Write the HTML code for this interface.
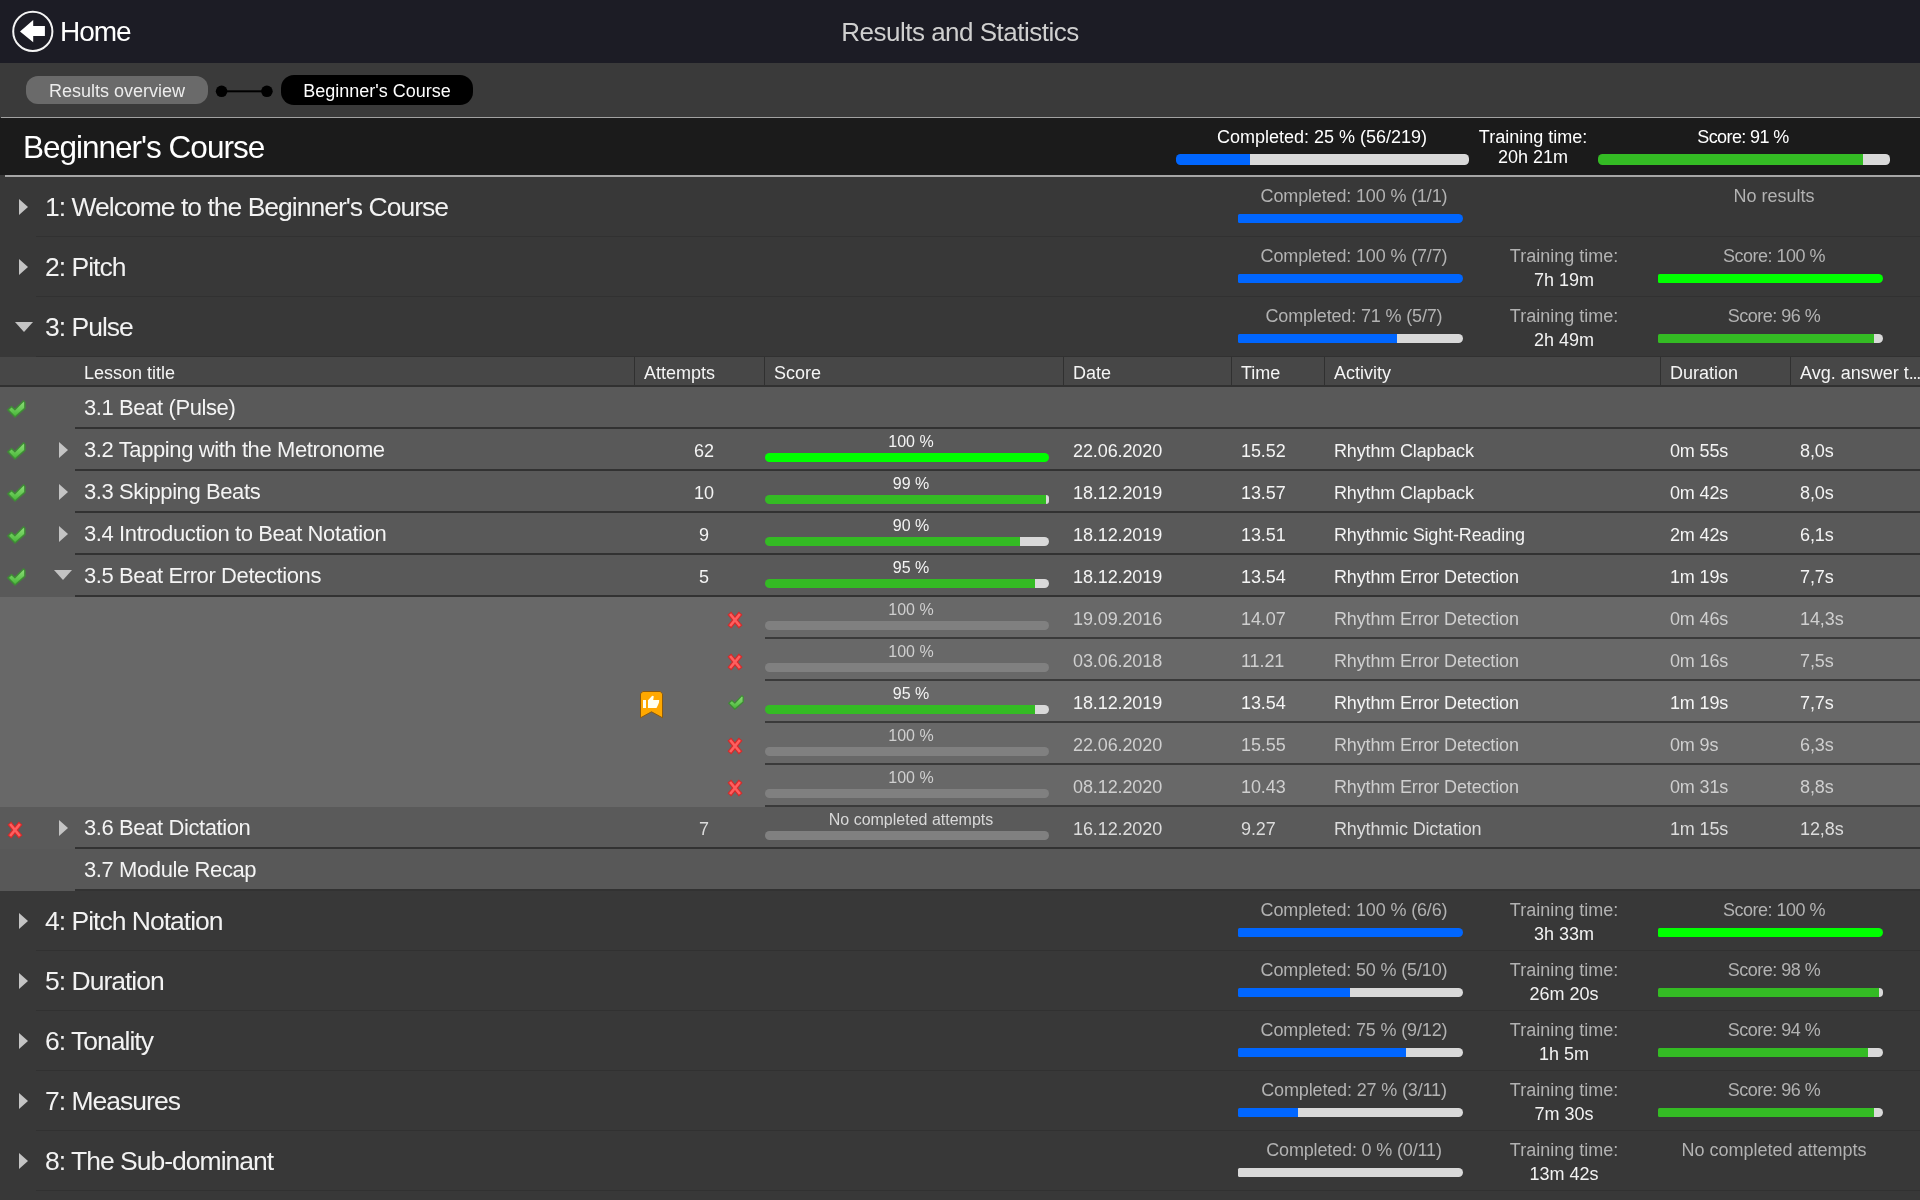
<!DOCTYPE html><html><head><meta charset="utf-8"><style>
html,body{margin:0;padding:0}body{width:1920px;height:1200px;overflow:hidden;position:relative;background:#383838;font-family:"Liberation Sans", sans-serif}
.t{position:absolute;white-space:nowrap;-webkit-font-smoothing:antialiased;will-change:transform}.r{position:absolute}
</style></head><body>
<div class="r" style="left:0px;top:0px;width:1920px;height:63px;background:#1c1c25;"></div>
<svg class="r" style="left:0;top:0" width="60" height="62"><circle cx="32.8" cy="31.4" r="19.6" fill="none" stroke="#f4f4f4" stroke-width="2"/><polygon points="20,31.4 33.2,20 33.2,25.9 44.9,25.9 44.9,36.1 33.2,36.1 33.2,42.3" fill="#fff"/></svg>
<div class="t" style="left:59.5px;top:16.40px;font-size:28px;line-height:32.20px;color:#ffffff;letter-spacing:-1px;">Home</div>
<div class="t" style="left:360px;width:1200px;text-align:center;top:17.94px;font-size:26px;line-height:29.90px;color:#cfcfcf;letter-spacing:-0.5px;">Results and Statistics</div>
<div class="r" style="left:0px;top:63px;width:1920px;height:54px;background:#3a3a3a;"></div>
<div class="r" style="left:26px;top:76px;width:182px;height:28px;background:#6a6a6a;border-radius:12px"></div>
<div class="t" style="left:-483px;width:1200px;text-align:center;top:80.61px;font-size:18px;line-height:20.70px;color:#ececec;">Results overview</div>
<svg class="r" style="left:210px;top:80px" width="70" height="24"><circle cx="11.6" cy="11.3" r="5.8" fill="#000"/><circle cx="56.9" cy="11.3" r="5.8" fill="#000"/><rect x="11" y="10.3" width="46" height="2" fill="#000"/></svg>
<div class="r" style="left:281px;top:75px;width:192px;height:30px;background:#000000;border-radius:13px"></div>
<div class="t" style="left:-223px;width:1200px;text-align:center;top:80.61px;font-size:18px;line-height:20.70px;color:#ffffff;">Beginner's Course</div>
<div class="r" style="left:1px;top:117px;width:1919px;height:1px;background:#a2a2a2;"></div>
<div class="r" style="left:0px;top:118px;width:1920px;height:57px;background:#1b1b1b;"></div>
<div class="t" style="left:23px;top:129.07px;font-size:31.5px;line-height:36.22px;color:#ffffff;letter-spacing:-1px;">Beginner's Course</div>
<div class="t" style="left:722px;width:1200px;text-align:center;top:127.31px;font-size:18px;line-height:20.70px;color:#ffffff;">Completed: 25 % (56/219)</div>
<div class="r" style="left:1176px;top:154px;width:74.0px;height:11px;background:#0066ff;border-radius:4.5px 0 0 4.5px"></div>
<div class="r" style="left:1250.0px;top:154px;width:219.0px;height:11px;background:#d9d9d9;border-radius:0 4.5px 4.5px 0"></div>
<div class="t" style="left:933px;width:1200px;text-align:center;top:127.31px;font-size:18px;line-height:20.70px;color:#ffffff;">Training time:</div>
<div class="t" style="left:933px;width:1200px;text-align:center;top:147.41px;font-size:18px;line-height:20.70px;color:#ffffff;">20h 21m</div>
<div class="t" style="left:1143px;width:1200px;text-align:center;top:127.31px;font-size:18px;line-height:20.70px;color:#ffffff;letter-spacing:-0.6px;">Score: 91 %</div>
<div class="r" style="left:1598px;top:154px;width:264.8px;height:11px;background:#34bb24;border-radius:4.5px 0 0 4.5px"></div>
<div class="r" style="left:1862.8px;top:154px;width:27.2px;height:11px;background:#d9d9d9;border-radius:0 4.5px 4.5px 0"></div>
<div class="r" style="left:5px;top:175px;width:1915px;height:2px;background:#a6a6a6;"></div>
<svg class="r" style="left:19px;top:199px" width="9" height="16"><polygon points="0,0 9,8.0 0,16" fill="#c4c4c4"/></svg>
<div class="t" style="left:45px;top:191.58px;font-size:26.5px;line-height:30.47px;color:#f2f2f2;letter-spacing:-0.99px;">1: Welcome to the Beginner's Course</div>
<div class="t" style="left:754px;width:1200px;text-align:center;top:186.41px;font-size:18px;line-height:20.70px;color:#b2b2b2;letter-spacing:-0.15px;">Completed: 100 % (1/1)</div>
<div class="r" style="left:1238px;top:214px;width:225px;height:9px;background:#0066ff;border-radius:1.5px 4.5px 4.5px 1.5px"></div>
<div class="t" style="left:1174px;width:1200px;text-align:center;top:186.41px;font-size:18px;line-height:20.70px;color:#b2b2b2;">No results</div>
<div class="r" style="left:36px;top:236px;width:1884px;height:1px;background:#313131;"></div>
<svg class="r" style="left:19px;top:259px" width="9" height="16"><polygon points="0,0 9,8.0 0,16" fill="#c4c4c4"/></svg>
<div class="t" style="left:45px;top:251.58px;font-size:26.5px;line-height:30.47px;color:#f2f2f2;letter-spacing:-0.99px;">2: Pitch</div>
<div class="t" style="left:754px;width:1200px;text-align:center;top:246.41px;font-size:18px;line-height:20.70px;color:#b2b2b2;letter-spacing:-0.15px;">Completed: 100 % (7/7)</div>
<div class="r" style="left:1238px;top:274px;width:225px;height:9px;background:#0066ff;border-radius:1.5px 4.5px 4.5px 1.5px"></div>
<div class="t" style="left:964px;width:1200px;text-align:center;top:246.41px;font-size:18px;line-height:20.70px;color:#b2b2b2;">Training time:</div>
<div class="t" style="left:964px;width:1200px;text-align:center;top:270.41px;font-size:18px;line-height:20.70px;color:#f2f2f2;">7h 19m</div>
<div class="t" style="left:1174px;width:1200px;text-align:center;top:246.41px;font-size:18px;line-height:20.70px;color:#b2b2b2;letter-spacing:-0.5px;">Score: 100 %</div>
<div class="r" style="left:1658px;top:274px;width:225px;height:9px;background:#00ff00;border-radius:1.5px 4.5px 4.5px 1.5px"></div>
<div class="r" style="left:36px;top:296px;width:1884px;height:1px;background:#313131;"></div>
<svg class="r" style="left:15px;top:322px" width="18" height="10"><polygon points="0,0 18,0 9.0,10" fill="#c4c4c4"/></svg>
<div class="t" style="left:45px;top:311.58px;font-size:26.5px;line-height:30.47px;color:#f2f2f2;letter-spacing:-0.99px;">3: Pulse</div>
<div class="t" style="left:754px;width:1200px;text-align:center;top:306.41px;font-size:18px;line-height:20.70px;color:#b2b2b2;letter-spacing:-0.15px;">Completed: 71 % (5/7)</div>
<div class="r" style="left:1238px;top:334px;width:158.6px;height:9px;background:#0066ff;border-radius:1.5px 0 0 1.5px"></div>
<div class="r" style="left:1396.6px;top:334px;width:66.4px;height:9px;background:#d9d9d9;border-radius:0 4.5px 4.5px 0"></div>
<div class="t" style="left:964px;width:1200px;text-align:center;top:306.41px;font-size:18px;line-height:20.70px;color:#b2b2b2;">Training time:</div>
<div class="t" style="left:964px;width:1200px;text-align:center;top:330.41px;font-size:18px;line-height:20.70px;color:#f2f2f2;">2h 49m</div>
<div class="t" style="left:1174px;width:1200px;text-align:center;top:306.41px;font-size:18px;line-height:20.70px;color:#b2b2b2;letter-spacing:-0.5px;">Score: 96 %</div>
<div class="r" style="left:1658px;top:334px;width:216.0px;height:9px;background:#34bb24;border-radius:1.5px 0 0 1.5px"></div>
<div class="r" style="left:1874.0px;top:334px;width:9.0px;height:9px;background:#d9d9d9;border-radius:0 4.5px 4.5px 0"></div>
<div class="r" style="left:36px;top:356px;width:1884px;height:1px;background:#313131;"></div>
<div class="r" style="left:0px;top:357px;width:1920px;height:28px;background:#474747;"></div>
<div class="r" style="left:0px;top:385px;width:1920px;height:2px;background:#313131;"></div>
<div class="r" style="left:634px;top:357px;width:1px;height:28px;background:#303030;"></div>
<div class="r" style="left:764px;top:357px;width:1px;height:28px;background:#303030;"></div>
<div class="r" style="left:1063px;top:357px;width:1px;height:28px;background:#303030;"></div>
<div class="r" style="left:1231px;top:357px;width:1px;height:28px;background:#303030;"></div>
<div class="r" style="left:1324px;top:357px;width:1px;height:28px;background:#303030;"></div>
<div class="r" style="left:1660px;top:357px;width:1px;height:28px;background:#303030;"></div>
<div class="r" style="left:1790px;top:357px;width:1px;height:28px;background:#303030;"></div>
<div class="t" style="left:84px;top:362.91px;font-size:18px;line-height:20.70px;color:#f4f4f4;">Lesson title</div>
<div class="t" style="left:644px;top:362.91px;font-size:18px;line-height:20.70px;color:#f4f4f4;">Attempts</div>
<div class="t" style="left:774px;top:362.91px;font-size:18px;line-height:20.70px;color:#f4f4f4;">Score</div>
<div class="t" style="left:1073px;top:362.91px;font-size:18px;line-height:20.70px;color:#f4f4f4;">Date</div>
<div class="t" style="left:1241px;top:362.91px;font-size:18px;line-height:20.70px;color:#f4f4f4;">Time</div>
<div class="t" style="left:1334px;top:362.91px;font-size:18px;line-height:20.70px;color:#f4f4f4;">Activity</div>
<div class="t" style="left:1670px;top:362.91px;font-size:18px;line-height:20.70px;color:#f4f4f4;">Duration</div>
<div class="t" style="left:1800px;top:362.91px;font-size:18px;line-height:20.70px;color:#f4f4f4;">Avg. answer t<span style="letter-spacing:-1.3px">...</span></div>
<div class="r" style="left:0px;top:387px;width:1920px;height:42px;background:#595959;"></div>
<div class="r" style="left:75px;top:427px;width:1845px;height:2px;background:#323232;"></div>
<svg class="r" style="left:7px;top:399px" width="20" height="20" viewBox="0 0 20 20"><defs><linearGradient id="g7399" x1="0" y1="0" x2="0" y2="1"><stop offset="0" stop-color="#8fe07a"/><stop offset="1" stop-color="#45b535"/></linearGradient></defs><polygon points="0.9,10.9 4.5,7.5 8,10.6 16.4,1.9 17.9,3.2 17.9,9.4 8,18" fill="url(#g7399)" stroke="#3f8a36" stroke-width="1.5" stroke-linejoin="round"/></svg>
<div class="t" style="left:84px;top:394.93px;font-size:22px;line-height:25.30px;color:#f4f4f4;letter-spacing:-0.4px;">3.1 Beat (Pulse)</div>
<div class="r" style="left:0px;top:429px;width:1920px;height:42px;background:#595959;"></div>
<div class="r" style="left:75px;top:469px;width:1845px;height:2px;background:#323232;"></div>
<svg class="r" style="left:7px;top:441px" width="20" height="20" viewBox="0 0 20 20"><defs><linearGradient id="g7441" x1="0" y1="0" x2="0" y2="1"><stop offset="0" stop-color="#8fe07a"/><stop offset="1" stop-color="#45b535"/></linearGradient></defs><polygon points="0.9,10.9 4.5,7.5 8,10.6 16.4,1.9 17.9,3.2 17.9,9.4 8,18" fill="url(#g7441)" stroke="#3f8a36" stroke-width="1.5" stroke-linejoin="round"/></svg>
<svg class="r" style="left:58.6px;top:442px" width="9" height="16"><polygon points="0,0 9,8.0 0,16" fill="#c4c4c4"/></svg>
<div class="t" style="left:84px;top:436.93px;font-size:22px;line-height:25.30px;color:#f4f4f4;letter-spacing:-0.4px;">3.2 Tapping with the Metronome</div>
<div class="t" style="left:104px;width:1200px;text-align:center;top:441.31px;font-size:18px;line-height:20.70px;color:#f4f4f4;">62</div>
<div class="t" style="left:311px;width:1200px;text-align:center;top:433.16px;font-size:16px;line-height:18.40px;color:#f4f4f4;">100 %</div>
<div class="r" style="left:765px;top:453px;width:284px;height:9px;background:#00ff00;border-radius:4.5px 4.5px 4.5px 4.5px"></div>
<div class="t" style="left:1073px;top:441.31px;font-size:18px;line-height:20.70px;color:#f4f4f4;letter-spacing:-0.1px;">22.06.2020</div>
<div class="t" style="left:1241px;top:441.31px;font-size:18px;line-height:20.70px;color:#f4f4f4;letter-spacing:-0.1px;">15.52</div>
<div class="t" style="left:1334px;top:441.31px;font-size:18px;line-height:20.70px;color:#f4f4f4;letter-spacing:-0.15px;">Rhythm Clapback</div>
<div class="t" style="left:1670px;top:441.31px;font-size:18px;line-height:20.70px;color:#f4f4f4;letter-spacing:-0.15px;">0m 55s</div>
<div class="t" style="left:1800px;top:441.31px;font-size:18px;line-height:20.70px;color:#f4f4f4;letter-spacing:-0.1px;">8,0s</div>
<div class="r" style="left:0px;top:471px;width:1920px;height:42px;background:#595959;"></div>
<div class="r" style="left:75px;top:511px;width:1845px;height:2px;background:#323232;"></div>
<svg class="r" style="left:7px;top:483px" width="20" height="20" viewBox="0 0 20 20"><defs><linearGradient id="g7483" x1="0" y1="0" x2="0" y2="1"><stop offset="0" stop-color="#8fe07a"/><stop offset="1" stop-color="#45b535"/></linearGradient></defs><polygon points="0.9,10.9 4.5,7.5 8,10.6 16.4,1.9 17.9,3.2 17.9,9.4 8,18" fill="url(#g7483)" stroke="#3f8a36" stroke-width="1.5" stroke-linejoin="round"/></svg>
<svg class="r" style="left:58.6px;top:484px" width="9" height="16"><polygon points="0,0 9,8.0 0,16" fill="#c4c4c4"/></svg>
<div class="t" style="left:84px;top:478.93px;font-size:22px;line-height:25.30px;color:#f4f4f4;letter-spacing:-0.4px;">3.3 Skipping Beats</div>
<div class="t" style="left:104px;width:1200px;text-align:center;top:483.31px;font-size:18px;line-height:20.70px;color:#f4f4f4;">10</div>
<div class="t" style="left:311px;width:1200px;text-align:center;top:475.16px;font-size:16px;line-height:18.40px;color:#f4f4f4;">99 %</div>
<div class="r" style="left:765px;top:495px;width:281.2px;height:9px;background:#34bb24;border-radius:4.5px 0 0 4.5px"></div>
<div class="r" style="left:1046.2px;top:495px;width:2.8px;height:9px;background:#d9d9d9;border-radius:0 4.5px 4.5px 0"></div>
<div class="t" style="left:1073px;top:483.31px;font-size:18px;line-height:20.70px;color:#f4f4f4;letter-spacing:-0.1px;">18.12.2019</div>
<div class="t" style="left:1241px;top:483.31px;font-size:18px;line-height:20.70px;color:#f4f4f4;letter-spacing:-0.1px;">13.57</div>
<div class="t" style="left:1334px;top:483.31px;font-size:18px;line-height:20.70px;color:#f4f4f4;letter-spacing:-0.15px;">Rhythm Clapback</div>
<div class="t" style="left:1670px;top:483.31px;font-size:18px;line-height:20.70px;color:#f4f4f4;letter-spacing:-0.15px;">0m 42s</div>
<div class="t" style="left:1800px;top:483.31px;font-size:18px;line-height:20.70px;color:#f4f4f4;letter-spacing:-0.1px;">8,0s</div>
<div class="r" style="left:0px;top:513px;width:1920px;height:42px;background:#595959;"></div>
<div class="r" style="left:75px;top:553px;width:1845px;height:2px;background:#323232;"></div>
<svg class="r" style="left:7px;top:525px" width="20" height="20" viewBox="0 0 20 20"><defs><linearGradient id="g7525" x1="0" y1="0" x2="0" y2="1"><stop offset="0" stop-color="#8fe07a"/><stop offset="1" stop-color="#45b535"/></linearGradient></defs><polygon points="0.9,10.9 4.5,7.5 8,10.6 16.4,1.9 17.9,3.2 17.9,9.4 8,18" fill="url(#g7525)" stroke="#3f8a36" stroke-width="1.5" stroke-linejoin="round"/></svg>
<svg class="r" style="left:58.6px;top:526px" width="9" height="16"><polygon points="0,0 9,8.0 0,16" fill="#c4c4c4"/></svg>
<div class="t" style="left:84px;top:520.93px;font-size:22px;line-height:25.30px;color:#f4f4f4;letter-spacing:-0.4px;">3.4 Introduction to Beat Notation</div>
<div class="t" style="left:104px;width:1200px;text-align:center;top:525.31px;font-size:18px;line-height:20.70px;color:#f4f4f4;">9</div>
<div class="t" style="left:311px;width:1200px;text-align:center;top:517.16px;font-size:16px;line-height:18.40px;color:#f4f4f4;">90 %</div>
<div class="r" style="left:765px;top:537px;width:254.7px;height:9px;background:#34bb24;border-radius:4.5px 0 0 4.5px"></div>
<div class="r" style="left:1019.7px;top:537px;width:29.3px;height:9px;background:#d9d9d9;border-radius:0 4.5px 4.5px 0"></div>
<div class="t" style="left:1073px;top:525.31px;font-size:18px;line-height:20.70px;color:#f4f4f4;letter-spacing:-0.1px;">18.12.2019</div>
<div class="t" style="left:1241px;top:525.31px;font-size:18px;line-height:20.70px;color:#f4f4f4;letter-spacing:-0.1px;">13.51</div>
<div class="t" style="left:1334px;top:525.31px;font-size:18px;line-height:20.70px;color:#f4f4f4;letter-spacing:-0.15px;">Rhythmic Sight-Reading</div>
<div class="t" style="left:1670px;top:525.31px;font-size:18px;line-height:20.70px;color:#f4f4f4;letter-spacing:-0.15px;">2m 42s</div>
<div class="t" style="left:1800px;top:525.31px;font-size:18px;line-height:20.70px;color:#f4f4f4;letter-spacing:-0.1px;">6,1s</div>
<div class="r" style="left:0px;top:555px;width:1920px;height:42px;background:#595959;"></div>
<div class="r" style="left:75px;top:595px;width:1845px;height:2px;background:#323232;"></div>
<svg class="r" style="left:7px;top:567px" width="20" height="20" viewBox="0 0 20 20"><defs><linearGradient id="g7567" x1="0" y1="0" x2="0" y2="1"><stop offset="0" stop-color="#8fe07a"/><stop offset="1" stop-color="#45b535"/></linearGradient></defs><polygon points="0.9,10.9 4.5,7.5 8,10.6 16.4,1.9 17.9,3.2 17.9,9.4 8,18" fill="url(#g7567)" stroke="#3f8a36" stroke-width="1.5" stroke-linejoin="round"/></svg>
<svg class="r" style="left:54px;top:570px" width="18" height="10"><polygon points="0,0 18,0 9.0,10" fill="#c4c4c4"/></svg>
<div class="t" style="left:84px;top:562.93px;font-size:22px;line-height:25.30px;color:#f4f4f4;letter-spacing:-0.4px;">3.5 Beat Error Detections</div>
<div class="t" style="left:104px;width:1200px;text-align:center;top:567.31px;font-size:18px;line-height:20.70px;color:#f4f4f4;">5</div>
<div class="t" style="left:311px;width:1200px;text-align:center;top:559.16px;font-size:16px;line-height:18.40px;color:#f4f4f4;">95 %</div>
<div class="r" style="left:765px;top:579px;width:269.8px;height:9px;background:#34bb24;border-radius:4.5px 0 0 4.5px"></div>
<div class="r" style="left:1034.8px;top:579px;width:14.2px;height:9px;background:#d9d9d9;border-radius:0 4.5px 4.5px 0"></div>
<div class="t" style="left:1073px;top:567.31px;font-size:18px;line-height:20.70px;color:#f4f4f4;letter-spacing:-0.1px;">18.12.2019</div>
<div class="t" style="left:1241px;top:567.31px;font-size:18px;line-height:20.70px;color:#f4f4f4;letter-spacing:-0.1px;">13.54</div>
<div class="t" style="left:1334px;top:567.31px;font-size:18px;line-height:20.70px;color:#f4f4f4;letter-spacing:-0.15px;">Rhythm Error Detection</div>
<div class="t" style="left:1670px;top:567.31px;font-size:18px;line-height:20.70px;color:#f4f4f4;letter-spacing:-0.15px;">1m 19s</div>
<div class="t" style="left:1800px;top:567.31px;font-size:18px;line-height:20.70px;color:#f4f4f4;letter-spacing:-0.1px;">7,7s</div>
<div class="r" style="left:0px;top:597px;width:1920px;height:210px;background:#686868;"></div>
<div class="r" style="left:765px;top:637px;width:1155px;height:2px;background:#3a3a3a;"></div>
<svg class="r" style="left:727px;top:611px" width="16" height="18" viewBox="0 0 16 18"><path d="M3.9,4 L12.1,14 M12.1,4 L3.9,14" stroke="#d62a2a" stroke-width="4.8" stroke-linecap="square"/><path d="M3.9,4 L12.1,14 M12.1,4 L3.9,14" stroke="#ff5e5e" stroke-width="2.6" stroke-linecap="square"/></svg>
<div class="t" style="left:311px;width:1200px;text-align:center;top:601.16px;font-size:16px;line-height:18.40px;color:#cfcfcf;">100 %</div>
<div class="r" style="left:765px;top:621px;width:284px;height:9px;background:#808080;border-radius:4.5px 4.5px 4.5px 4.5px"></div>
<div class="t" style="left:1073px;top:609.31px;font-size:18px;line-height:20.70px;color:#cfcfcf;letter-spacing:-0.1px;">19.09.2016</div>
<div class="t" style="left:1241px;top:609.31px;font-size:18px;line-height:20.70px;color:#cfcfcf;letter-spacing:-0.1px;">14.07</div>
<div class="t" style="left:1334px;top:609.31px;font-size:18px;line-height:20.70px;color:#cfcfcf;letter-spacing:-0.15px;">Rhythm Error Detection</div>
<div class="t" style="left:1670px;top:609.31px;font-size:18px;line-height:20.70px;color:#cfcfcf;letter-spacing:-0.15px;">0m 46s</div>
<div class="t" style="left:1800px;top:609.31px;font-size:18px;line-height:20.70px;color:#cfcfcf;letter-spacing:-0.1px;">14,3s</div>
<div class="r" style="left:765px;top:679px;width:1155px;height:2px;background:#3a3a3a;"></div>
<svg class="r" style="left:727px;top:653px" width="16" height="18" viewBox="0 0 16 18"><path d="M3.9,4 L12.1,14 M12.1,4 L3.9,14" stroke="#d62a2a" stroke-width="4.8" stroke-linecap="square"/><path d="M3.9,4 L12.1,14 M12.1,4 L3.9,14" stroke="#ff5e5e" stroke-width="2.6" stroke-linecap="square"/></svg>
<div class="t" style="left:311px;width:1200px;text-align:center;top:643.16px;font-size:16px;line-height:18.40px;color:#cfcfcf;">100 %</div>
<div class="r" style="left:765px;top:663px;width:284px;height:9px;background:#808080;border-radius:4.5px 4.5px 4.5px 4.5px"></div>
<div class="t" style="left:1073px;top:651.31px;font-size:18px;line-height:20.70px;color:#cfcfcf;letter-spacing:-0.1px;">03.06.2018</div>
<div class="t" style="left:1241px;top:651.31px;font-size:18px;line-height:20.70px;color:#cfcfcf;letter-spacing:-0.1px;">11.21</div>
<div class="t" style="left:1334px;top:651.31px;font-size:18px;line-height:20.70px;color:#cfcfcf;letter-spacing:-0.15px;">Rhythm Error Detection</div>
<div class="t" style="left:1670px;top:651.31px;font-size:18px;line-height:20.70px;color:#cfcfcf;letter-spacing:-0.15px;">0m 16s</div>
<div class="t" style="left:1800px;top:651.31px;font-size:18px;line-height:20.70px;color:#cfcfcf;letter-spacing:-0.1px;">7,5s</div>
<div class="r" style="left:765px;top:721px;width:1155px;height:2px;background:#3a3a3a;"></div>
<svg class="r" style="left:728px;top:694px" width="17" height="17" viewBox="0 0 20 20"><defs><linearGradient id="gb" x1="0" y1="0" x2="0" y2="1"><stop offset="0" stop-color="#8fe07a"/><stop offset="1" stop-color="#45b535"/></linearGradient></defs><polygon points="0.9,10.9 4.5,7.5 8,10.6 16.4,1.9 17.9,3.2 17.9,9.4 8,18" fill="url(#gb)" stroke="#3f8a36" stroke-width="1.5" stroke-linejoin="round"/></svg>
<div class="t" style="left:311px;width:1200px;text-align:center;top:685.16px;font-size:16px;line-height:18.40px;color:#f4f4f4;">95 %</div>
<div class="r" style="left:765px;top:705px;width:269.8px;height:9px;background:#34bb24;border-radius:4.5px 0 0 4.5px"></div>
<div class="r" style="left:1034.8px;top:705px;width:14.2px;height:9px;background:#d9d9d9;border-radius:0 4.5px 4.5px 0"></div>
<div class="t" style="left:1073px;top:693.31px;font-size:18px;line-height:20.70px;color:#f4f4f4;letter-spacing:-0.1px;">18.12.2019</div>
<div class="t" style="left:1241px;top:693.31px;font-size:18px;line-height:20.70px;color:#f4f4f4;letter-spacing:-0.1px;">13.54</div>
<div class="t" style="left:1334px;top:693.31px;font-size:18px;line-height:20.70px;color:#f4f4f4;letter-spacing:-0.15px;">Rhythm Error Detection</div>
<div class="t" style="left:1670px;top:693.31px;font-size:18px;line-height:20.70px;color:#f4f4f4;letter-spacing:-0.15px;">1m 19s</div>
<div class="t" style="left:1800px;top:693.31px;font-size:18px;line-height:20.70px;color:#f4f4f4;letter-spacing:-0.1px;">7,7s</div>
<svg class="r" style="left:639px;top:690px" width="25" height="29" viewBox="0 0 25 29"><path d="M1.5,3.8 L3.8,1.5 L21.2,1.5 L23.5,3.8 L23.5,27.8 L12.5,21.8 L1.5,27.8 Z" fill="#ffa800" stroke="#8a5a10" stroke-width="1"/><rect x="4" y="10" width="3" height="8" fill="#fffff0"/><path d="M9,18 L9,10.2 L13.2,5.8 L14.8,6.2 L14.2,10 L20.2,10 L20,12.5 L19,15 L17.5,18 Z" fill="#fffff0"/></svg>
<div class="r" style="left:765px;top:763px;width:1155px;height:2px;background:#3a3a3a;"></div>
<svg class="r" style="left:727px;top:737px" width="16" height="18" viewBox="0 0 16 18"><path d="M3.9,4 L12.1,14 M12.1,4 L3.9,14" stroke="#d62a2a" stroke-width="4.8" stroke-linecap="square"/><path d="M3.9,4 L12.1,14 M12.1,4 L3.9,14" stroke="#ff5e5e" stroke-width="2.6" stroke-linecap="square"/></svg>
<div class="t" style="left:311px;width:1200px;text-align:center;top:727.16px;font-size:16px;line-height:18.40px;color:#cfcfcf;">100 %</div>
<div class="r" style="left:765px;top:747px;width:284px;height:9px;background:#808080;border-radius:4.5px 4.5px 4.5px 4.5px"></div>
<div class="t" style="left:1073px;top:735.31px;font-size:18px;line-height:20.70px;color:#cfcfcf;letter-spacing:-0.1px;">22.06.2020</div>
<div class="t" style="left:1241px;top:735.31px;font-size:18px;line-height:20.70px;color:#cfcfcf;letter-spacing:-0.1px;">15.55</div>
<div class="t" style="left:1334px;top:735.31px;font-size:18px;line-height:20.70px;color:#cfcfcf;letter-spacing:-0.15px;">Rhythm Error Detection</div>
<div class="t" style="left:1670px;top:735.31px;font-size:18px;line-height:20.70px;color:#cfcfcf;letter-spacing:-0.15px;">0m 9s</div>
<div class="t" style="left:1800px;top:735.31px;font-size:18px;line-height:20.70px;color:#cfcfcf;letter-spacing:-0.1px;">6,3s</div>
<div class="r" style="left:765px;top:805px;width:1155px;height:2px;background:#3a3a3a;"></div>
<svg class="r" style="left:727px;top:779px" width="16" height="18" viewBox="0 0 16 18"><path d="M3.9,4 L12.1,14 M12.1,4 L3.9,14" stroke="#d62a2a" stroke-width="4.8" stroke-linecap="square"/><path d="M3.9,4 L12.1,14 M12.1,4 L3.9,14" stroke="#ff5e5e" stroke-width="2.6" stroke-linecap="square"/></svg>
<div class="t" style="left:311px;width:1200px;text-align:center;top:769.16px;font-size:16px;line-height:18.40px;color:#cfcfcf;">100 %</div>
<div class="r" style="left:765px;top:789px;width:284px;height:9px;background:#808080;border-radius:4.5px 4.5px 4.5px 4.5px"></div>
<div class="t" style="left:1073px;top:777.31px;font-size:18px;line-height:20.70px;color:#cfcfcf;letter-spacing:-0.1px;">08.12.2020</div>
<div class="t" style="left:1241px;top:777.31px;font-size:18px;line-height:20.70px;color:#cfcfcf;letter-spacing:-0.1px;">10.43</div>
<div class="t" style="left:1334px;top:777.31px;font-size:18px;line-height:20.70px;color:#cfcfcf;letter-spacing:-0.15px;">Rhythm Error Detection</div>
<div class="t" style="left:1670px;top:777.31px;font-size:18px;line-height:20.70px;color:#cfcfcf;letter-spacing:-0.15px;">0m 31s</div>
<div class="t" style="left:1800px;top:777.31px;font-size:18px;line-height:20.70px;color:#cfcfcf;letter-spacing:-0.1px;">8,8s</div>
<div class="r" style="left:0px;top:807px;width:1920px;height:42px;background:#5a5a5a;"></div>
<div class="r" style="left:75px;top:847px;width:1845px;height:2px;background:#323232;"></div>
<svg class="r" style="left:7px;top:821px" width="16" height="18" viewBox="0 0 16 18"><path d="M3.9,4 L12.1,14 M12.1,4 L3.9,14" stroke="#d62a2a" stroke-width="4.8" stroke-linecap="square"/><path d="M3.9,4 L12.1,14 M12.1,4 L3.9,14" stroke="#ff5e5e" stroke-width="2.6" stroke-linecap="square"/></svg>
<svg class="r" style="left:58.6px;top:820px" width="9" height="16"><polygon points="0,0 9,8.0 0,16" fill="#c4c4c4"/></svg>
<div class="t" style="left:84px;top:814.93px;font-size:22px;line-height:25.30px;color:#f4f4f4;letter-spacing:-0.4px;">3.6 Beat Dictation</div>
<div class="t" style="left:104px;width:1200px;text-align:center;top:819.31px;font-size:18px;line-height:20.70px;color:#dcdcdc;">7</div>
<div class="t" style="left:311px;width:1200px;text-align:center;top:811.16px;font-size:16px;line-height:18.40px;color:#d8d8d8;">No completed attempts</div>
<div class="r" style="left:765px;top:831px;width:284px;height:9px;background:#808080;border-radius:4.5px 4.5px 4.5px 4.5px"></div>
<div class="t" style="left:1073px;top:819.31px;font-size:18px;line-height:20.70px;color:#dcdcdc;letter-spacing:-0.1px;">16.12.2020</div>
<div class="t" style="left:1241px;top:819.31px;font-size:18px;line-height:20.70px;color:#dcdcdc;letter-spacing:-0.1px;">9.27</div>
<div class="t" style="left:1334px;top:819.31px;font-size:18px;line-height:20.70px;color:#dcdcdc;letter-spacing:-0.15px;">Rhythmic Dictation</div>
<div class="t" style="left:1670px;top:819.31px;font-size:18px;line-height:20.70px;color:#dcdcdc;letter-spacing:-0.15px;">1m 15s</div>
<div class="t" style="left:1800px;top:819.31px;font-size:18px;line-height:20.70px;color:#dcdcdc;letter-spacing:-0.1px;">12,8s</div>
<div class="r" style="left:0px;top:849px;width:1920px;height:42px;background:#585858;"></div>
<div class="r" style="left:75px;top:889px;width:1845px;height:2px;background:#323232;"></div>
<div class="t" style="left:84px;top:856.93px;font-size:22px;line-height:25.30px;color:#f4f4f4;letter-spacing:-0.4px;">3.7 Module Recap</div>
<div class="r" style="left:0px;top:891px;width:1920px;height:309px;background:#383838;"></div>
<div class="r" style="left:75px;top:889px;width:1845px;height:2px;background:#323232;"></div>
<svg class="r" style="left:19px;top:913px" width="9" height="16"><polygon points="0,0 9,8.0 0,16" fill="#c4c4c4"/></svg>
<div class="t" style="left:45px;top:905.58px;font-size:26.5px;line-height:30.47px;color:#f2f2f2;letter-spacing:-0.99px;">4: Pitch Notation</div>
<div class="t" style="left:754px;width:1200px;text-align:center;top:900.41px;font-size:18px;line-height:20.70px;color:#b2b2b2;letter-spacing:-0.15px;">Completed: 100 % (6/6)</div>
<div class="r" style="left:1238px;top:928px;width:225px;height:9px;background:#0066ff;border-radius:1.5px 4.5px 4.5px 1.5px"></div>
<div class="t" style="left:964px;width:1200px;text-align:center;top:900.41px;font-size:18px;line-height:20.70px;color:#b2b2b2;">Training time:</div>
<div class="t" style="left:964px;width:1200px;text-align:center;top:924.41px;font-size:18px;line-height:20.70px;color:#f2f2f2;">3h 33m</div>
<div class="t" style="left:1174px;width:1200px;text-align:center;top:900.41px;font-size:18px;line-height:20.70px;color:#b2b2b2;letter-spacing:-0.5px;">Score: 100 %</div>
<div class="r" style="left:1658px;top:928px;width:225px;height:9px;background:#00ff00;border-radius:1.5px 4.5px 4.5px 1.5px"></div>
<div class="r" style="left:36px;top:950px;width:1884px;height:1px;background:#313131;"></div>
<svg class="r" style="left:19px;top:973px" width="9" height="16"><polygon points="0,0 9,8.0 0,16" fill="#c4c4c4"/></svg>
<div class="t" style="left:45px;top:965.58px;font-size:26.5px;line-height:30.47px;color:#f2f2f2;letter-spacing:-0.99px;">5: Duration</div>
<div class="t" style="left:754px;width:1200px;text-align:center;top:960.41px;font-size:18px;line-height:20.70px;color:#b2b2b2;letter-spacing:-0.15px;">Completed: 50 % (5/10)</div>
<div class="r" style="left:1238px;top:988px;width:112.0px;height:9px;background:#0066ff;border-radius:1.5px 0 0 1.5px"></div>
<div class="r" style="left:1350.0px;top:988px;width:113.0px;height:9px;background:#d9d9d9;border-radius:0 4.5px 4.5px 0"></div>
<div class="t" style="left:964px;width:1200px;text-align:center;top:960.41px;font-size:18px;line-height:20.70px;color:#b2b2b2;">Training time:</div>
<div class="t" style="left:964px;width:1200px;text-align:center;top:984.41px;font-size:18px;line-height:20.70px;color:#f2f2f2;">26m 20s</div>
<div class="t" style="left:1174px;width:1200px;text-align:center;top:960.41px;font-size:18px;line-height:20.70px;color:#b2b2b2;letter-spacing:-0.5px;">Score: 98 %</div>
<div class="r" style="left:1658px;top:988px;width:220.5px;height:9px;background:#34bb24;border-radius:1.5px 0 0 1.5px"></div>
<div class="r" style="left:1878.5px;top:988px;width:4.5px;height:9px;background:#d9d9d9;border-radius:0 4.5px 4.5px 0"></div>
<div class="r" style="left:36px;top:1010px;width:1884px;height:1px;background:#313131;"></div>
<svg class="r" style="left:19px;top:1033px" width="9" height="16"><polygon points="0,0 9,8.0 0,16" fill="#c4c4c4"/></svg>
<div class="t" style="left:45px;top:1025.58px;font-size:26.5px;line-height:30.47px;color:#f2f2f2;letter-spacing:-0.99px;">6: Tonality</div>
<div class="t" style="left:754px;width:1200px;text-align:center;top:1020.41px;font-size:18px;line-height:20.70px;color:#b2b2b2;letter-spacing:-0.15px;">Completed: 75 % (9/12)</div>
<div class="r" style="left:1238px;top:1048px;width:167.8px;height:9px;background:#0066ff;border-radius:1.5px 0 0 1.5px"></div>
<div class="r" style="left:1405.8px;top:1048px;width:57.2px;height:9px;background:#d9d9d9;border-radius:0 4.5px 4.5px 0"></div>
<div class="t" style="left:964px;width:1200px;text-align:center;top:1020.41px;font-size:18px;line-height:20.70px;color:#b2b2b2;">Training time:</div>
<div class="t" style="left:964px;width:1200px;text-align:center;top:1044.41px;font-size:18px;line-height:20.70px;color:#f2f2f2;">1h 5m</div>
<div class="t" style="left:1174px;width:1200px;text-align:center;top:1020.41px;font-size:18px;line-height:20.70px;color:#b2b2b2;letter-spacing:-0.5px;">Score: 94 %</div>
<div class="r" style="left:1658px;top:1048px;width:209.9px;height:9px;background:#34bb24;border-radius:1.5px 0 0 1.5px"></div>
<div class="r" style="left:1867.9px;top:1048px;width:15.1px;height:9px;background:#d9d9d9;border-radius:0 4.5px 4.5px 0"></div>
<div class="r" style="left:36px;top:1070px;width:1884px;height:1px;background:#313131;"></div>
<svg class="r" style="left:19px;top:1093px" width="9" height="16"><polygon points="0,0 9,8.0 0,16" fill="#c4c4c4"/></svg>
<div class="t" style="left:45px;top:1085.58px;font-size:26.5px;line-height:30.47px;color:#f2f2f2;letter-spacing:-0.99px;">7: Measures</div>
<div class="t" style="left:754px;width:1200px;text-align:center;top:1080.41px;font-size:18px;line-height:20.70px;color:#b2b2b2;letter-spacing:-0.15px;">Completed: 27 % (3/11)</div>
<div class="r" style="left:1238px;top:1108px;width:59.9px;height:9px;background:#0066ff;border-radius:1.5px 0 0 1.5px"></div>
<div class="r" style="left:1297.9px;top:1108px;width:165.1px;height:9px;background:#d9d9d9;border-radius:0 4.5px 4.5px 0"></div>
<div class="t" style="left:964px;width:1200px;text-align:center;top:1080.41px;font-size:18px;line-height:20.70px;color:#b2b2b2;">Training time:</div>
<div class="t" style="left:964px;width:1200px;text-align:center;top:1104.41px;font-size:18px;line-height:20.70px;color:#f2f2f2;">7m 30s</div>
<div class="t" style="left:1174px;width:1200px;text-align:center;top:1080.41px;font-size:18px;line-height:20.70px;color:#b2b2b2;letter-spacing:-0.5px;">Score: 96 %</div>
<div class="r" style="left:1658px;top:1108px;width:216.0px;height:9px;background:#34bb24;border-radius:1.5px 0 0 1.5px"></div>
<div class="r" style="left:1874.0px;top:1108px;width:9.0px;height:9px;background:#d9d9d9;border-radius:0 4.5px 4.5px 0"></div>
<div class="r" style="left:36px;top:1130px;width:1884px;height:1px;background:#313131;"></div>
<svg class="r" style="left:19px;top:1153px" width="9" height="16"><polygon points="0,0 9,8.0 0,16" fill="#c4c4c4"/></svg>
<div class="t" style="left:45px;top:1145.58px;font-size:26.5px;line-height:30.47px;color:#f2f2f2;letter-spacing:-0.99px;">8: The Sub-dominant</div>
<div class="t" style="left:754px;width:1200px;text-align:center;top:1140.41px;font-size:18px;line-height:20.70px;color:#b2b2b2;letter-spacing:-0.15px;">Completed: 0 % (0/11)</div>
<div class="r" style="left:1238px;top:1168px;width:225px;height:9px;background:#d9d9d9;border-radius:1.5px 4.5px 4.5px 1.5px"></div>
<div class="t" style="left:964px;width:1200px;text-align:center;top:1140.41px;font-size:18px;line-height:20.70px;color:#b2b2b2;">Training time:</div>
<div class="t" style="left:964px;width:1200px;text-align:center;top:1164.41px;font-size:18px;line-height:20.70px;color:#f2f2f2;">13m 42s</div>
<div class="t" style="left:1174px;width:1200px;text-align:center;top:1140.41px;font-size:18px;line-height:20.70px;color:#b2b2b2;">No completed attempts</div>
<div class="r" style="left:36px;top:1190px;width:1884px;height:1px;background:#313131;"></div>
</body></html>
